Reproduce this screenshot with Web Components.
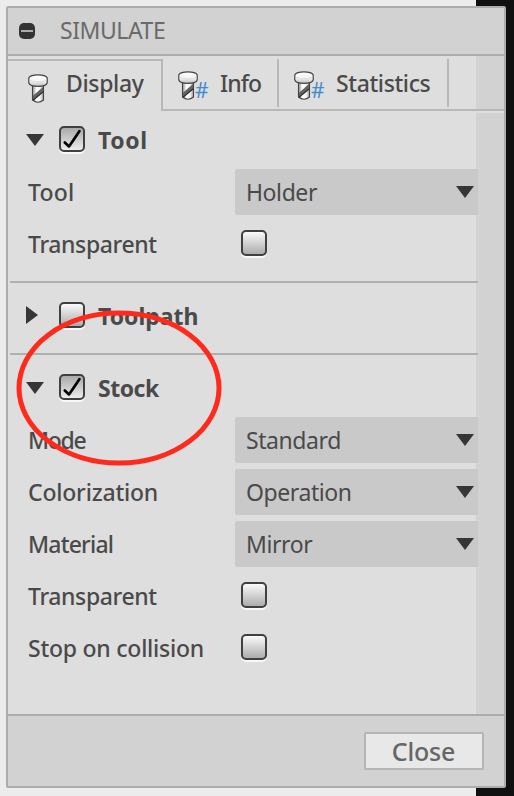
<!DOCTYPE html>
<html lang="en">
<head>
<meta charset="utf-8">
<title>Simulate</title>
<style>
body{margin:0;width:514px;height:796px;overflow:hidden;background:linear-gradient(90deg,#ececec 476px,#101010 476px);font-family:"Noto Sans","Open Sans",sans-serif;font-size:23px;color:#4a4a4a}
</style>
</head>
<body>
<simulate-panel></simulate-panel>
<script>
function define(name, html, setup) {
  customElements.define(name, class extends HTMLElement {
    connectedCallback() {
      if (this.shadowRoot) return;
      const root = this.attachShadow({ mode: 'open' });
      root.innerHTML = html;
      if (setup) setup(this, root);
    }
  });
}

define('check-box', `
<style>
:host{display:block;box-sizing:border-box;width:26px;height:26px;flex:none;border:2px solid #404040;border-radius:5px;background:linear-gradient(#fafafa,#acacac);box-shadow:0 2px 0 #f8f8f8}
:host([checked]){background:linear-gradient(#a9a9a9,#ececec)}
svg{display:none;overflow:visible}
:host([checked]) svg{display:block}
</style>
<svg width="22" height="22"><path d="M3.8 14.4 L8 18.4 L18.4 3.2" fill="none" stroke="#000" stroke-width="2.7" stroke-linecap="round" stroke-linejoin="round"/></svg>`);

define('drop-down', `
<style>
:host{display:flex;align-items:center;justify-content:space-between;box-sizing:border-box;width:243px;height:46px;padding:0 4px 0 11px;background:#c9c9c9;border-radius:2px 0 0 2px;line-height:45px}
span{letter-spacing:-.42px}
</style>
<span><slot></slot></span><svg width="18" height="12"><path d="M0 0H18L9 12Z" fill="#363636"/></svg>`);

define('tool-icon', `
<style>
:host{display:block;position:relative;width:20px;height:30px;flex:none}
.hash{display:none;position:absolute;left:17px;top:9px;font:400 21px/26px "Noto Sans",sans-serif;letter-spacing:0;color:#478bd0}
:host([hash]) .hash{display:block}
</style>
<svg width="20" height="30" viewBox="0 0 20 30">
<defs>
<linearGradient id="s"><stop stop-color="#8c8c8c"/><stop offset=".35" stop-color="#fff"/><stop offset=".7" stop-color="#f4f4f4"/><stop offset="1" stop-color="#999"/></linearGradient>
<linearGradient id="h" x2="0" y2="1"><stop stop-color="#fff"/><stop offset=".55" stop-color="#f3f4f6"/><stop offset="1" stop-color="#bbb"/></linearGradient>
</defs>
<path d="M4.5 11.5H15.5V26Q10 30.5 4.5 26Z" fill="url(#s)" stroke="#444" stroke-width="1.1"/>
<path d="M5 21.8L15 13V18L5 26.4Z" fill="#626262"/>
<path d="M5 26.4L15.2 17.8" stroke="#222" stroke-width="1.1" fill="none"/>
<path d="M.8 3.8Q2.5 .8 10 .8T19.2 3.8V8.8Q18.5 12.3 10 12.3T.8 8.8Z" fill="url(#h)" stroke="#444" stroke-width="1.2"/>
<path d="M1.5 6.2Q10 9.5 18.5 6.2" fill="none" stroke="#d9d9d9" stroke-width=".8"/>
</svg><span class="hash">#</span>`);

define('panel-tab', `
<style>
:host{display:flex;box-sizing:border-box;height:48px;margin-top:3px;border-right:2px solid #b8b8b8;font-weight:500;line-height:48px}
:host([active]){height:51px;border-top:2px solid #b8b8b8}
tool-icon{margin:12px 0 0 var(--inset,15px)}
:host(:not([active])) tool-icon{margin-top:11px}
.label{margin-left:var(--gap,22px);white-space:nowrap;letter-spacing:var(--track,0)}
:host([active]) .label{margin-top:-2px}
tool-icon{transform:translateY(-2px)}
</style>
<tool-icon></tool-icon><span class="label"><slot></slot></span>`, (el, root) => {
  if (!el.hasAttribute('active')) root.querySelector('tool-icon').setAttribute('hash', '');
});

define('field-row', `
<style>
:host{display:grid;grid-template-columns:207px 1fr;align-items:center;height:52px;padding-left:20px}
.label{font-weight:500;line-height:50px;margin-top:-1px;white-space:nowrap;letter-spacing:var(--track,0)}
::slotted(check-box){margin:-2px 0 0 6px}
</style>
<span class="label"></span><slot></slot>`, (el, root) => {
  root.querySelector('.label').textContent = el.getAttribute('label');
});

define('panel-section', `
<style>
:host{display:block;width:470px;box-sizing:border-box}
.head{display:flex;align-items:center;height:52px;padding-left:18px}
.arrow{width:18px;height:18px;margin-right:15px}
.arrow svg{display:block}
:host([closed]) .arrow svg{transform:translateY(-1px) rotate(-90deg) translateY(-3px)}
check-box{margin:-2px 13px 0 0}
b{font-weight:700;line-height:50px;margin-top:-1px;letter-spacing:var(--head-track,0)}
</style>
<div class="head"><span class="arrow"><svg width="18" height="18"><path d="M0 3H18L9 15Z" fill="#363636"/></svg></span><check-box></check-box><b></b></div>
<slot></slot>`, (el, root) => {
  root.querySelector('b').textContent = el.getAttribute('heading');
  if (el.hasAttribute('checked')) root.querySelector('check-box').setAttribute('checked', '');
});

define('red-ellipse', `
<style>:host{display:block;position:absolute;left:16px;top:310px;width:206px;height:156px}svg{display:block}</style>
<svg width="206" height="156"><ellipse cx="103" cy="78" rx="100" ry="75" fill="none" stroke="#ff2a1c" stroke-width="5"/></svg>`);

define('simulate-panel', `
<style>
:host{display:flex;flex-direction:column;box-sizing:border-box;width:500px;height:782px;margin:6px 0 0 6px;border:2px solid #acacac;border-radius:2px;background:#dedede}
header{display:flex;align-items:center;box-sizing:border-box;height:48px;border-bottom:2px solid #acacac;background:#d2d2d2;color:#6a6a6a;padding-left:11px}
header svg{margin-right:25px}
header span{line-height:46px;margin-top:-2px;letter-spacing:-.45px}
nav{display:flex;align-items:flex-start;height:53px;background:linear-gradient(90deg,#dedede 468px,#d2d2d2 468px)}
.line{height:2px;background:linear-gradient(90deg,#dedede 153px,#b8b8b8 153px)}
main{flex:1;padding-top:3px;background:linear-gradient(#dedede,#dedede) 0 0/100% 2px no-repeat,linear-gradient(90deg,#dedede 468px,#d2d2d2 468px)}
hr{width:468px;height:2px;margin:0 0 0 2px;border:0;background:#b0b0b0}
.g11{height:11px}.g7{height:7px}
footer{display:flex;justify-content:flex-end;align-items:center;box-sizing:border-box;height:72px;border-top:2px solid #acacac;background:#d2d2d2;padding-right:20px}
button{box-sizing:border-box;width:120px;height:38px;border:2px solid #b5b5b5;border-radius:2px;background:#e8e8e8;color:#666;font:500 25px/32px "Noto Sans",sans-serif;letter-spacing:-.2px;padding:0 1px 1px 0}
</style>
<header><svg width="16" height="16"><rect width="16" height="16" rx="5" fill="#333"/><rect x="2" y="7" width="12" height="2" fill="#aaa"/></svg><span>SIMULATE</span></header>
<nav>
<panel-tab active style="width:155px;--inset:20px;--gap:18px;--track:-.35px">Display</panel-tab>
<panel-tab style="width:116px;--track:-.9px">Info</panel-tab>
<panel-tab style="width:170px;--track:-.4px">Statistics</panel-tab>
</nav>
<div class="line"></div>
<main>
<panel-section heading="Tool" checked style="--head-track:.6px">
<field-row label="Tool" style="--track:.2px"><drop-down>Holder</drop-down></field-row>
<field-row label="Transparent" style="--track:-.38px"><check-box></check-box></field-row>
</panel-section>
<div class="g11"></div><hr><div class="g7"></div>
<panel-section heading="Toolpath" closed></panel-section>
<div class="g11"></div><hr><div class="g7"></div>
<panel-section heading="Stock" checked style="--head-track:-.5px">
<field-row label="Mode" style="--track:-1.3px"><drop-down>Standard</drop-down></field-row>
<field-row label="Colorization" style="--track:-.2px"><drop-down>Operation</drop-down></field-row>
<field-row label="Material" style="--track:-.8px"><drop-down>Mirror</drop-down></field-row>
<field-row label="Transparent" style="--track:-.38px"><check-box></check-box></field-row>
<field-row label="Stop on collision" style="--track:-.24px"><check-box></check-box></field-row>
</panel-section>
</main>
<footer><button>Close</button></footer>
<red-ellipse></red-ellipse>`);
</script>
</body>
</html>
